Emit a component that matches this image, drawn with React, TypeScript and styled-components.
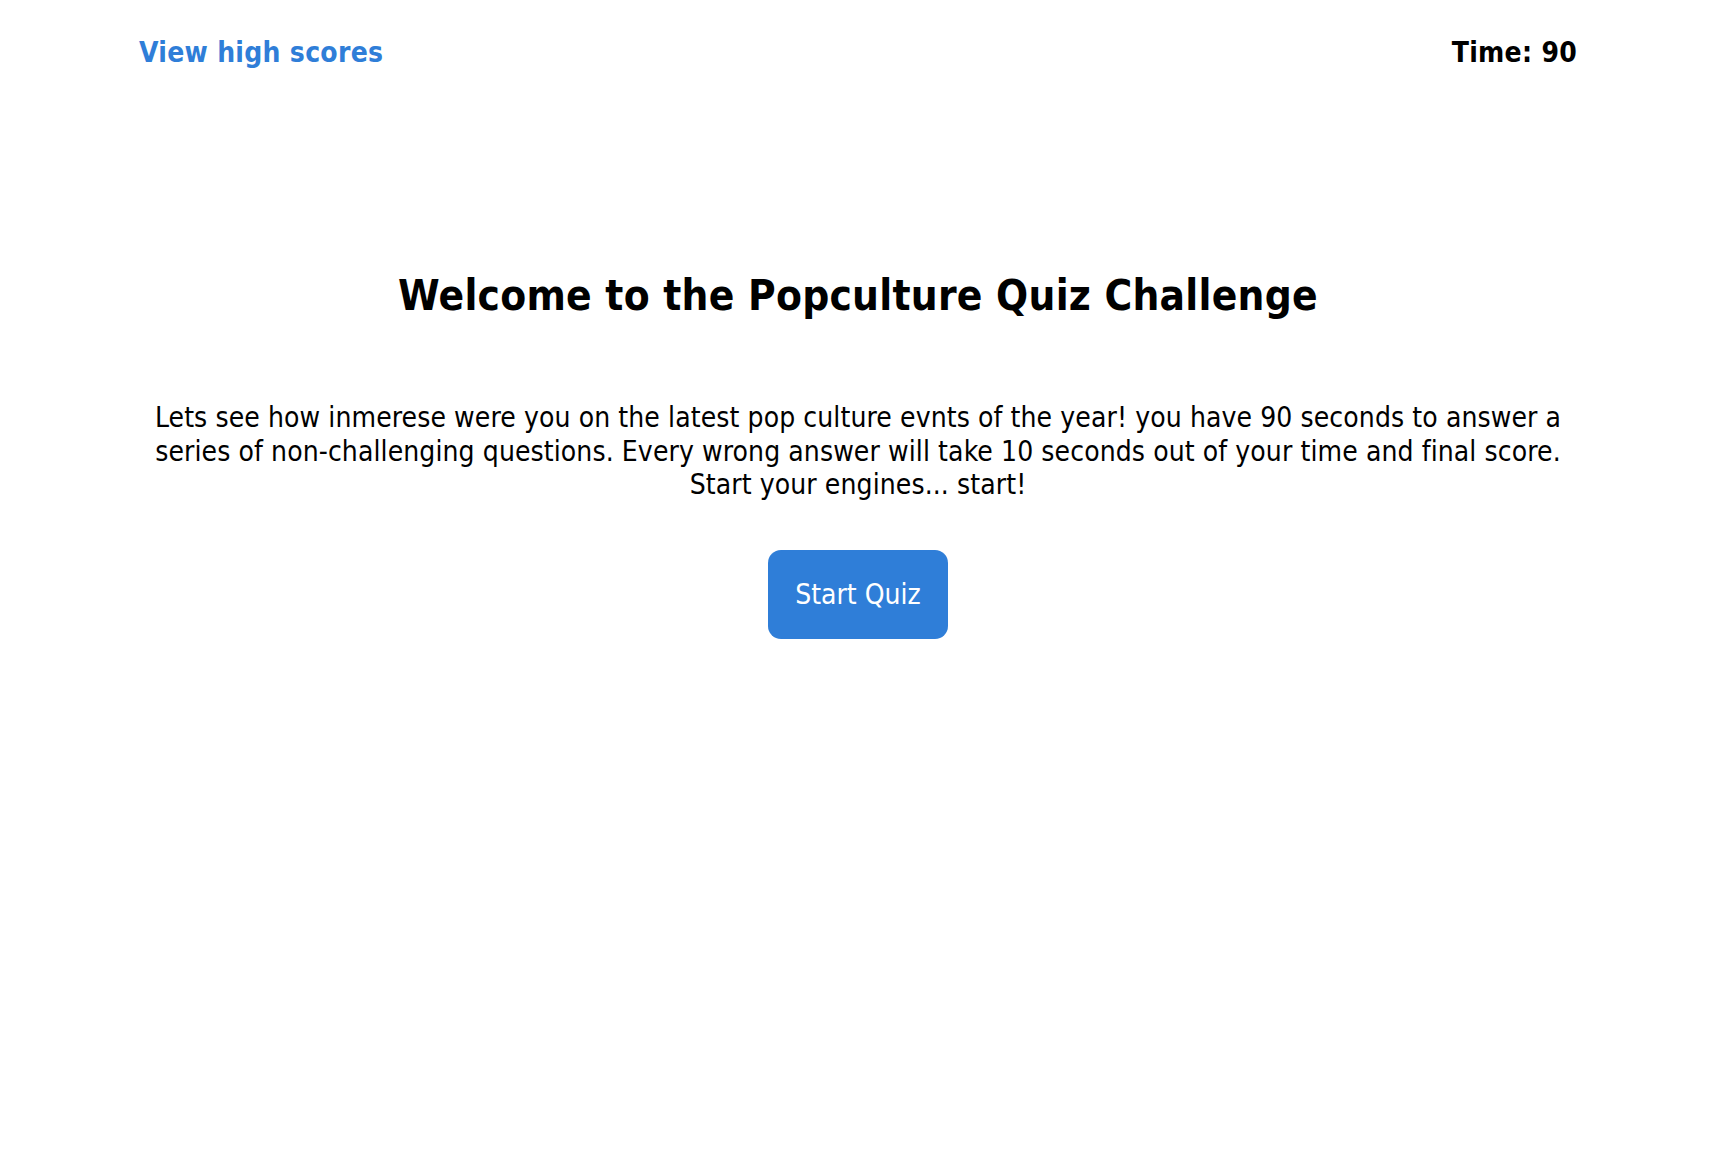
import React from "react";
import styled, { createGlobalStyle } from "styled-components";

const GlobalStyle = createGlobalStyle`
    html, body {
        margin: 0;
        padding: 0;
        background: #ffffff;
    }
    body {
        font-family: "DejaVu Sans", Verdana, sans-serif;
        font-stretch: condensed;
        color: #000000;
    }
`;

const App: React.FC = () => {
    return (
        <Page>
            <GlobalStyle />
            <Header>
                <ScoresLink href="#">View high scores</ScoresLink>
                <Timer>Time: 90</Timer>
            </Header>
            <Intro>
                <Title>Welcome to the Popculture Quiz Challenge</Title>
                <Description>
                    Lets see how inmerese were you on the latest pop culture
                    evnts of the year! you have 90 seconds to answer a series of
                    non-challenging questions. Every wrong answer will take 10
                    seconds out of your time and final score. Start your
                    engines... start!
                </Description>
                <StartButton type="button">Start Quiz</StartButton>
            </Intro>
        </Page>
    );
};

export default App;

const Page = styled.div`
    padding: 0 137px 0 139px;
    min-height: 1164px;
    box-sizing: border-box;
`;

const Header = styled.header`
    display: flex;
    justify-content: space-between;
    align-items: center;
    padding-top: 36px;
    font-size: 28px;
    line-height: 34px;
    font-weight: bold;
    letter-spacing: 0.28px;
`;

const ScoresLink = styled.a`
    color: #2f7ed8;
    text-decoration: none;
`;

const Timer = styled.div`
    color: #000000;
`;

const Intro = styled.main`
    display: flex;
    flex-direction: column;
    align-items: center;
    text-align: center;
    margin-top: 200px;
`;

const Title = styled.h1`
    margin: 0;
    font-size: 42px;
    line-height: 51px;
    font-weight: bold;
    letter-spacing: 0.25px;
`;

const Description = styled.p`
    margin: 80px 0 0;
    font-size: 28px;
    line-height: 33.6px;
    letter-spacing: 0.1px;
`;

const StartButton = styled.button`
    margin-top: 48px;
    padding: 27px 27px 26px;
    border: none;
    border-radius: 13px;
    background: #2f7ed8;
    color: #ffffff;
    font-family: inherit;
    font-stretch: inherit;
    font-size: 28px;
    line-height: 36px;
    cursor: pointer;
`;
